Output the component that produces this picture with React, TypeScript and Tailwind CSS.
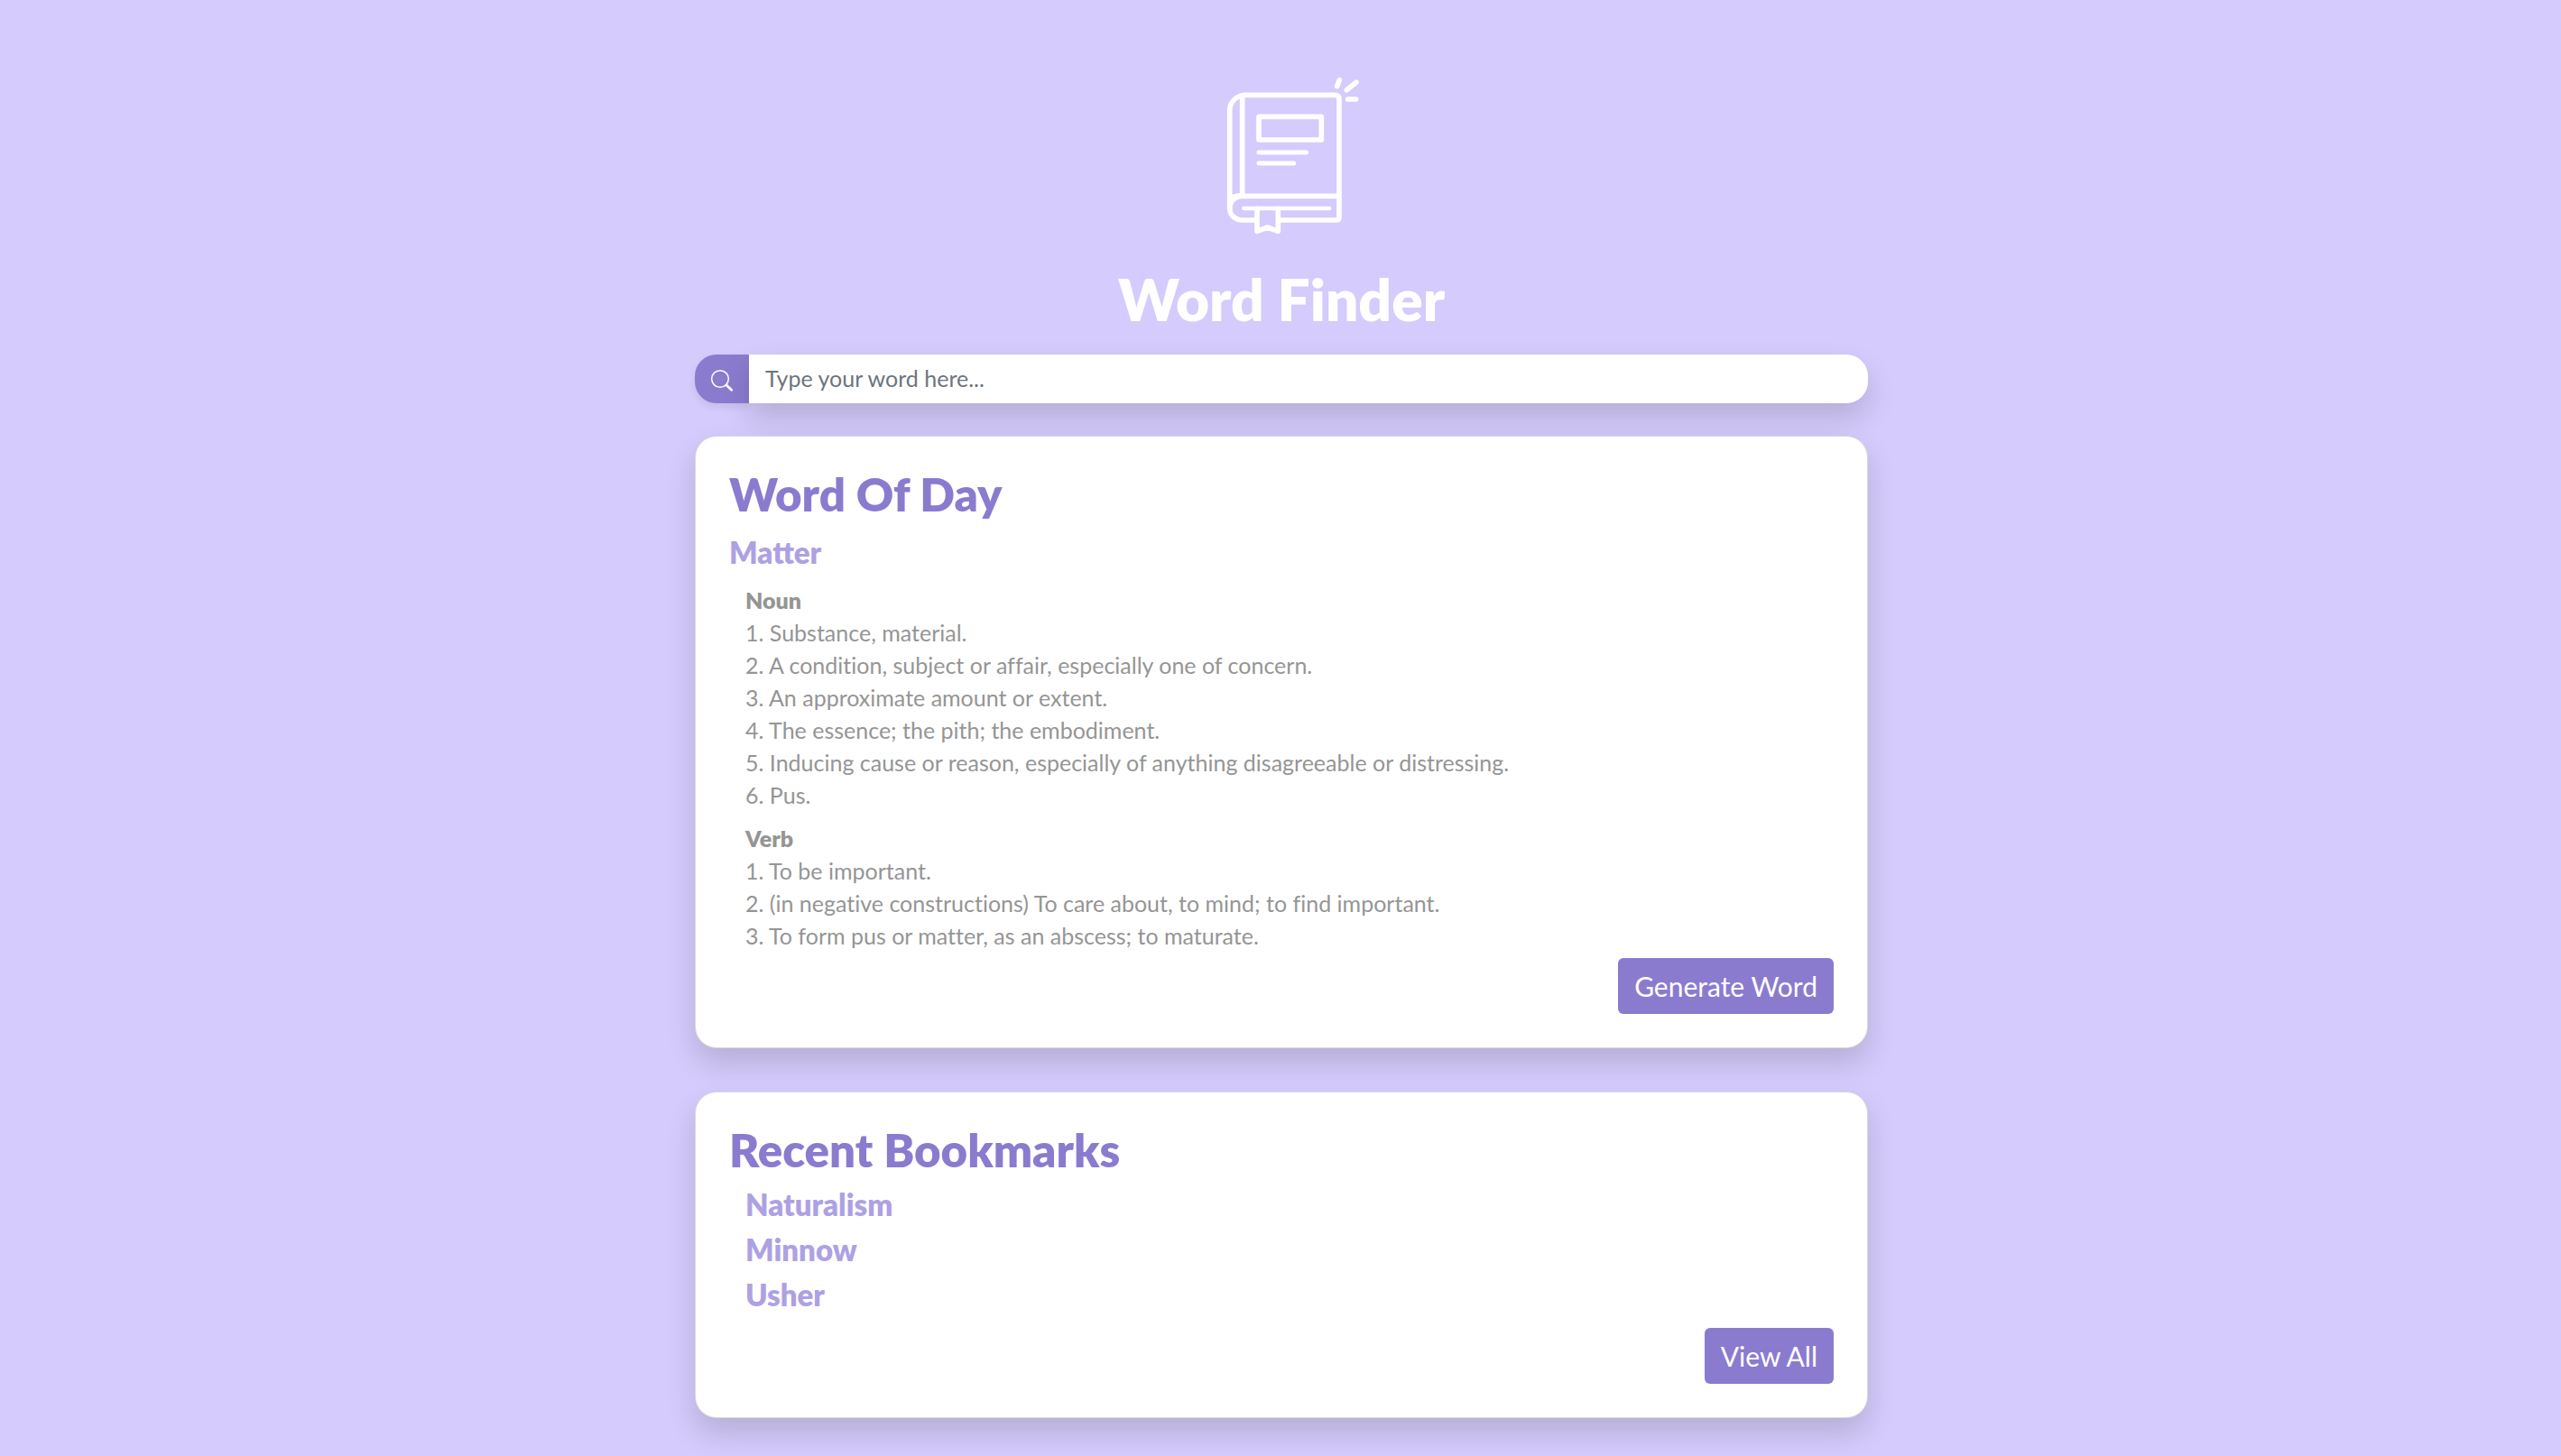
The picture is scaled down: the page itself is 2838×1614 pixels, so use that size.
import type { ReactNode } from "react";

type Entry = { part: string; meanings: string[] };

const entries: Entry[] = [
  {
    part: "Noun",
    meanings: [
      "Substance, material.",
      "A condition, subject or affair, especially one of concern.",
      "An approximate amount or extent.",
      "The essence; the pith; the embodiment.",
      "Inducing cause or reason, especially of anything disagreeable or distressing.",
      "Pus.",
    ],
  },
  {
    part: "Verb",
    meanings: [
      "To be important.",
      "(in negative constructions) To care about, to mind; to find important.",
      "To form pus or matter, as an abscess; to maturate.",
    ],
  },
];

const bookmarks = ["Naturalism", "Minnow", "Usher"];

function BookLogo() {
  return (
    <svg
      className="h-[200px] w-[180px]"
      viewBox="-30 0 540 600"
      fill="none"
      stroke="white"
      strokeWidth="17"
      strokeLinecap="round"
      strokeLinejoin="round"
      aria-hidden="true"
    >
      <path d="M68 480V158C68 128 92 106 122 106H418Q432 106 432 120V512Q432 522 422 522H236" />
      <path d="M152 522H110C86 522 68 504 68 483C68 460 86 442 110 442H430" />
      <path d="M110 440V110" />
      <path d="M70 450Q84 442 108 440" />
      <path d="M165 178H373V255H165Z" />
      <path d="M165 297H323M165 333H281" strokeWidth="15" />
      <path d="M115 483H399" strokeWidth="14" />
      <path d="M159 484V559L194 546L229 559V484" />
      <path d="M425 77L433 56M457 89L489 64M461 120H488" />
    </svg>
  );
}

function SearchIcon() {
  return (
    <svg className="h-[26px] w-[26px]" viewBox="0 0 78 78" fill="none" stroke="white" strokeLinecap="round" aria-hidden="true">
      <circle cx="33" cy="33" r="28" strokeWidth="4.5" />
      <path d="M54 54L71 70" strokeWidth="8.5" />
    </svg>
  );
}

function Card({ title, action, children }: { title: string; action: string; children: ReactNode }) {
  return (
    <section className="flex flex-col rounded-3xl border border-black/15 bg-white px-[37px] pt-[35px] pb-[37px] shadow-[0_16px_32px_rgba(0,0,0,0.15)]">
      <h2 className="text-[51px] leading-[58px] font-extrabold text-[#8b7bcf]">{title}</h2>
      {children}
      <button
        type="button"
        className="self-end rounded-md bg-[#8b7bcf] px-[18px] py-2 text-[30px] leading-[46px] text-white"
      >
        {action}
      </button>
    </section>
  );
}

export default function App() {
  return (
    <div className="min-h-screen bg-[#d5cbfc] pt-[70px] pr-4 pb-[42px] pl-[18px] font-['Lato',sans-serif]">
      <main className="mx-auto flex max-w-[1300px] flex-col">
        <header className="flex flex-col items-center gap-6">
          <BookLogo />
          <h1 className="text-[64px] leading-[76px] font-extrabold text-white">Word Finder</h1>
        </header>

        <form className="mt-[23px] flex h-[54px] rounded-3xl" role="search">
          <button
            type="button"
            aria-label="Search"
            className="flex w-[60px] items-center justify-center rounded-l-3xl bg-[#8b7bcf] pt-1 shadow-[0_4px_8px_rgba(0,0,0,0.08)]"
          >
            <SearchIcon />
          </button>
          <input
            type="text"
            aria-label="Word"
            placeholder="Type your word here..."
            className="min-w-0 flex-1 rounded-r-3xl bg-white px-[18px] text-[25px] text-[#6c757d] shadow-[0_16px_32px_rgba(0,0,0,0.15)] outline-none placeholder:text-[#6c757d]"
          />
        </form>

        <div className="mt-9 flex flex-col gap-12">
          <Card title="Word Of Day" action="Generate Word">
            <h3 className="mt-4 text-[33px] leading-[38px] font-extrabold text-[#aea1e3]">Matter</h3>
            <div className="mt-4 mb-[7px] ml-[18px] flex flex-col gap-3 text-[25px] leading-9 text-[#959595] [font-variant-ligatures:no-common-ligatures]">
              {entries.map(({ part, meanings }) => (
                <div key={part}>
                  <h4 className="font-extrabold">{part}</h4>
                  <ol>
                    {meanings.map((meaning, i) => (
                      <li key={meaning}>
                        {i + 1}. {meaning}
                      </li>
                    ))}
                  </ol>
                </div>
              ))}
            </div>
          </Card>

          <Card title="Recent Bookmarks" action="View All">
            <ul className="mt-1.5 mb-3 ml-[18px] text-[33px] leading-[50px] font-extrabold text-[#aea1e3]">
              {bookmarks.map((word) => (
                <li key={word}>{word}</li>
              ))}
            </ul>
          </Card>
        </div>
      </main>
    </div>
  );
}
